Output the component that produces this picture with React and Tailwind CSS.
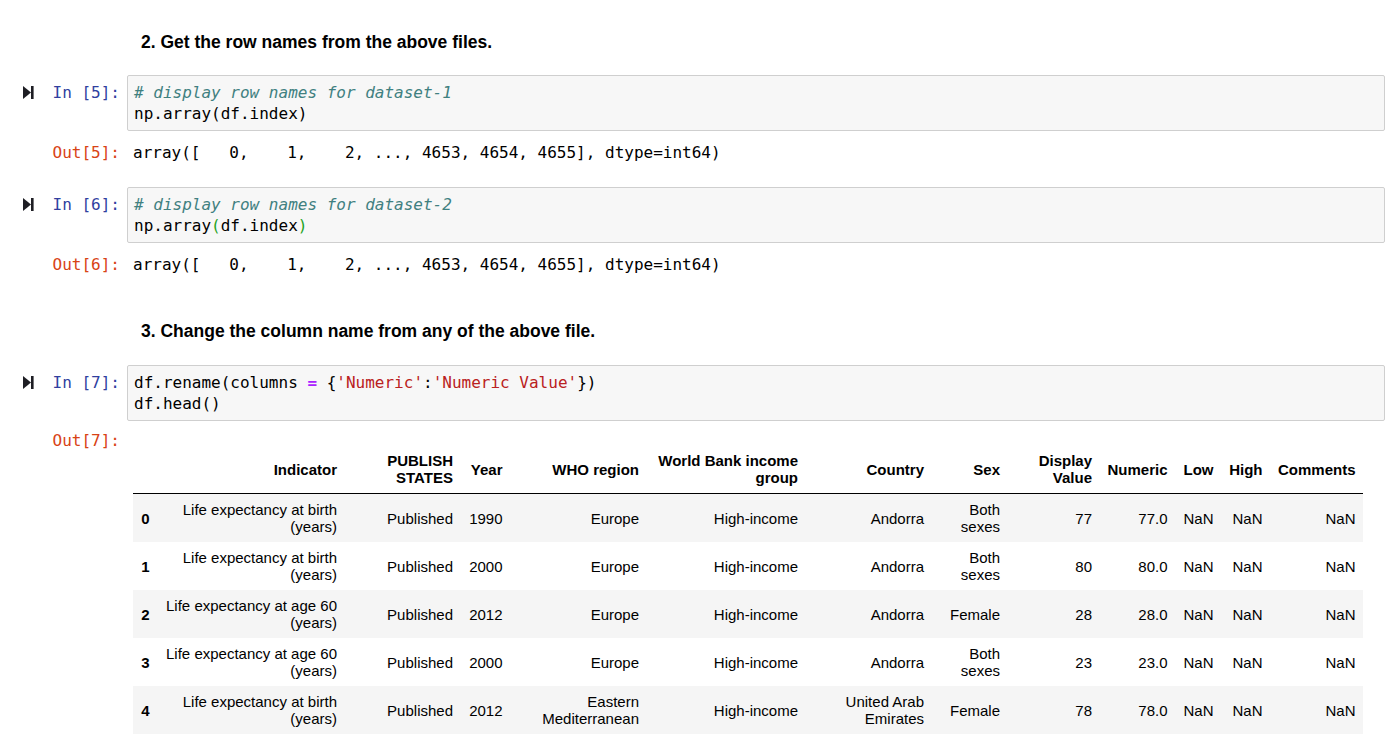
import React from 'react'

const mono = { fontFamily: '"DejaVu Sans Mono", "Liberation Mono", monospace' }

const RunIcon = () => (
	<svg width="11" height="13" viewBox="0 0 11 13" className="mt-[4px] shrink-0">
		<polygon points="0,0 8,6.5 0,13" fill="#1e1e24" />
		<rect x="8" y="0" width="2.6" height="13" fill="#1e1e24" />
	</svg>
)

const Markdown = ({ children, className }) => (
	<div className={`flex ${className}`}>
		<div className="w-[127px] shrink-0" />
		<div className="pl-[14px] text-[17.5px] leading-[20px] font-bold text-black" style={{ fontFamily: '"Liberation Sans", Arial, sans-serif' }}>
			{children}
		</div>
	</div>
)

const CodeCell = ({ n, lines, className }) => (
	<div className={`flex ${className}`}>
		<div className="w-[127px] shrink-0 flex items-start pt-[7px] pl-[23px]">
			<RunIcon />
			<div className="flex-1 text-right pr-[7px] text-[16px] leading-[21px] text-[#303f9f] whitespace-pre" style={mono}>
				{`In [${n}]:`}
			</div>
		</div>
		<div className="flex-1 border border-[#cfcfcf] bg-[#f7f7f7] rounded-[2px] px-[6px] py-[6px] text-[16px] leading-[21px] text-black" style={mono}>
			{lines.map((l, i) => (
				<div key={i} className="whitespace-pre">{l}</div>
			))}
		</div>
	</div>
)

const OutPrompt = ({ n }) => (
	<div className="w-[127px] shrink-0 text-right pr-[7px] text-[16px] leading-[21px] text-[#d84315] whitespace-pre" style={mono}>
		{`Out[${n}]:`}
	</div>
)

const TextOut = ({ n, text, className }) => (
	<div className={`flex ${className}`}>
		<OutPrompt n={n} />
		<div className="pl-[6px] text-[16px] leading-[21px] text-black whitespace-pre" style={mono}>{text}</div>
	</div>
)

const columns = ['Indicator', 'PUBLISH STATES', 'Year', 'WHO region', 'World Bank income group', 'Country', 'Sex', 'Display Value', 'Numeric', 'Low', 'High', 'Comments']
const widths = ['w-[24px]', 'w-[187.5px]', 'w-[116px]', 'w-[49.5px]', 'w-[136.5px]', 'w-[159px]', 'w-[126px]', 'w-[76px]', 'w-[92px]', 'w-[75.5px]', 'w-[46px]', 'w-[49px]', 'w-[93px]']

const rows = [
	['Life expectancy at birth (years)', 'Published', '1990', 'Europe', 'High-income', 'Andorra', 'Both sexes', '77', '77.0', 'NaN', 'NaN', 'NaN'],
	['Life expectancy at birth (years)', 'Published', '2000', 'Europe', 'High-income', 'Andorra', 'Both sexes', '80', '80.0', 'NaN', 'NaN', 'NaN'],
	['Life expectancy at age 60 (years)', 'Published', '2012', 'Europe', 'High-income', 'Andorra', 'Female', '28', '28.0', 'NaN', 'NaN', 'NaN'],
	['Life expectancy at age 60 (years)', 'Published', '2000', 'Europe', 'High-income', 'Andorra', 'Both sexes', '23', '23.0', 'NaN', 'NaN', 'NaN'],
	['Life expectancy at birth (years)', 'Published', '2012', 'Eastern Mediterranean', 'High-income', 'United Arab Emirates', 'Female', '78', '78.0', 'NaN', 'NaN', 'NaN'],
]

const DataFrame = () => (
	<table className="table-fixed w-[1230px] border-collapse text-[15px] leading-[17px] text-black" style={{ fontFamily: '"Liberation Sans", Arial, sans-serif' }}>
		<colgroup>
			{widths.map((w, i) => <col key={i} className={w} />)}
		</colgroup>
		<thead>
			<tr className="border-b border-black">
				<th className="px-[7.5px] py-[7px]" />
				{columns.map((c) => (
					<th key={c} className="px-[7.5px] py-[7px] text-right align-middle font-bold">{c}</th>
				))}
			</tr>
		</thead>
		<tbody>
			{rows.map((r, i) => (
				<tr key={i} className={i % 2 === 0 ? 'bg-[#f5f5f5]' : 'bg-white'}>
					<th className="px-[7.5px] py-[7px] text-right align-middle font-bold">{i}</th>
					{r.map((v, j) => (
						<td key={j} className="px-[7.5px] py-[7px] text-right align-middle">{v}</td>
					))}
				</tr>
			))}
		</tbody>
	</table>
)

export default function App() {
	const comment = 'text-[#408080] italic'
	return (
		<div className="w-full min-h-screen bg-white pr-[15px] pt-[32px] pb-[20px]">
			<Markdown>2. Get the row names from the above files.</Markdown>

			<CodeCell
				n={5}
				className="mt-[23px]"
				lines={[
					<span className={comment}># display row names for dataset-1</span>,
					'np.array(df.index)',
				]}
			/>
			<TextOut n={5} className="mt-[11px]" text="array([   0,    1,    2, ..., 4653, 4654, 4655], dtype=int64)" />

			<CodeCell
				n={6}
				className="mt-[24px]"
				lines={[
					<span className={comment}># display row names for dataset-2</span>,
					<span>np.array<span className="text-[#1ea31e]">(</span>df.index<span className="text-[#1ea31e]">)</span></span>,
				]}
			/>
			<TextOut n={6} className="mt-[11px]" text="array([   0,    1,    2, ..., 4653, 4654, 4655], dtype=int64)" />

			<Markdown className="mt-[46px]">3. Change the column name from any of the above file.</Markdown>

			<CodeCell
				n={7}
				className="mt-[24px]"
				lines={[
					<span>
						df.rename(columns <span className="text-[#aa22ff] font-bold">=</span> {'{'}
						<span className="text-[#ba2121]">'Numeric'</span>:<span className="text-[#ba2121]">'Numeric Value'</span>{'})'}
					</span>,
					'df.head()',
				]}
			/>
			<div className="flex mt-[9px]">
				<OutPrompt n={7} />
				<div className="pl-[6px] pt-[15px]">
					<DataFrame />
				</div>
			</div>
		</div>
	)
}
